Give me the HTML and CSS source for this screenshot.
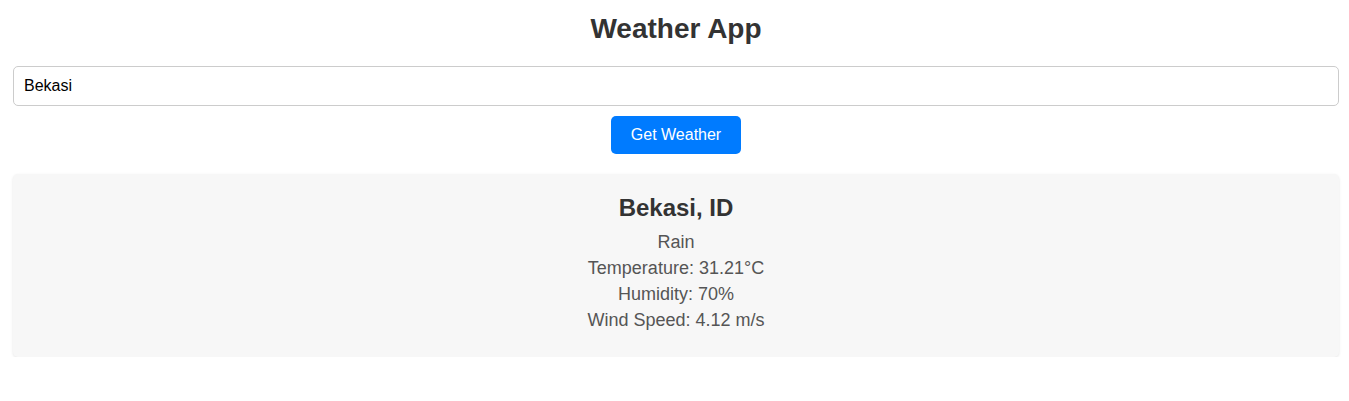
FILE: index.html
```html
<!DOCTYPE html>
<html lang="en">
<head>
<meta charset="utf-8">
<title>Weather App</title>
<link rel="stylesheet" href="styles.css">
</head>
<body>
<div class="app">
  <h1 class="title">Weather App</h1>
  <input class="city-input" type="text" value="Bekasi">
  <div class="actions">
    <button class="btn" type="button">Get Weather</button>
  </div>
  <div class="card">
    <h2 class="city">Bekasi, ID</h2>
    <p class="info">Rain</p>
    <p class="info">Temperature: 31.21°C</p>
    <p class="info">Humidity: 70%</p>
    <p class="info">Wind Speed: 4.12 m/s</p>
  </div>
</div>
</body>
</html>
```
FILE: styles.css
```css
* { box-sizing: border-box; }
body {
  margin: 0;
  font-family: "Liberation Sans", Arial, sans-serif;
  background: #fff;
  color: #333;
}
.app {
  padding: 0 10px 0 13px;
  display: flex;
  flex-direction: column;
}
.title {
  margin: 13px 0 21px;
  font-size: 28px;
  font-weight: bold;
  text-align: center;
  color: #333;
}
.city-input {
  width: 100%;
  height: 40px;
  padding: 10px;
  font-family: "Liberation Sans", Arial, sans-serif;
  font-size: 16px;
  color: #000;
  border: 1px solid #ccc;
  border-radius: 5px;
  outline: none;
}
.actions {
  display: flex;
  justify-content: center;
  margin: 10px 0 20px;
}
.btn {
  height: 38px;
  padding: 0 20px;
  font-family: "Liberation Sans", Arial, sans-serif;
  font-size: 16px;
  color: #fff;
  background: #007bff;
  border: none;
  border-radius: 5px;
}
.card {
  background: #f7f7f7;
  border-radius: 5px;
  padding: 20px 20px 21px;
  box-shadow: 0 1px 3px rgba(0,0,0,0.1);
  text-align: center;
}
.city {
  margin: 0 0 10px;
  font-size: 24px;
  font-weight: bold;
  color: #333;
}
.info {
  margin: 5px 0;
  font-size: 18px;
  color: #555;
}
```
